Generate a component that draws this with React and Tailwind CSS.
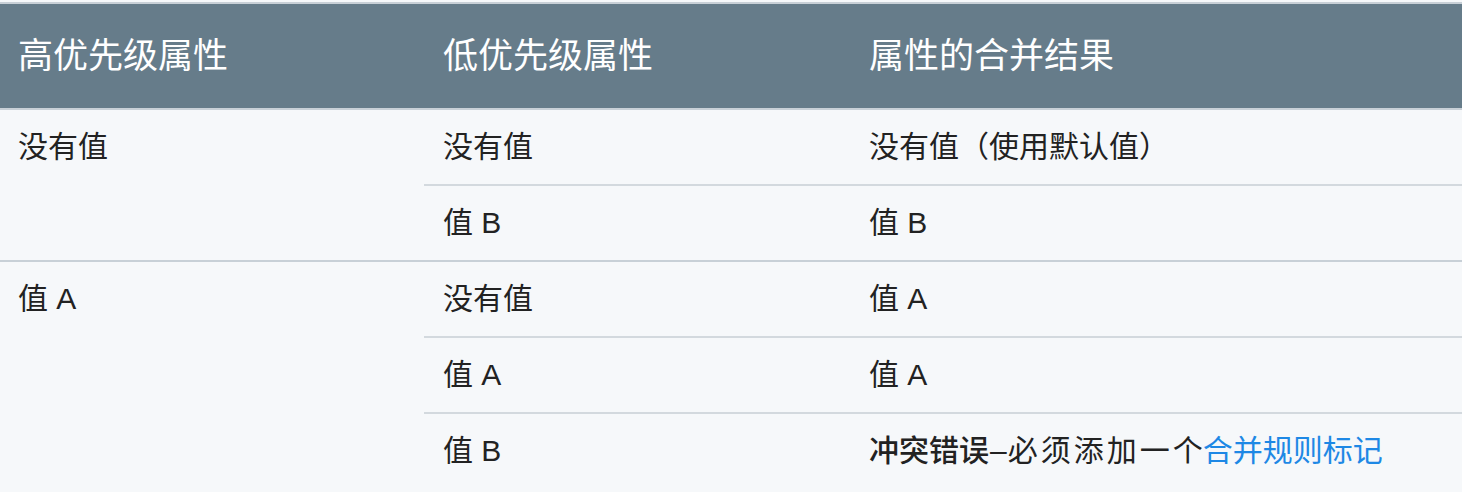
import React from 'react';

const font = { fontFamily: '"Liberation Sans", "Noto Sans CJK SC", sans-serif' };

const groups = [
  {
    high: '没有值',
    rows: [
      ['没有值', '没有值（使用默认值）'],
      ['值 B', '值 B'],
    ],
  },
  {
    high: '值 A',
    rows: [
      ['没有值', '值 A'],
      ['值 A', '值 A'],
      ['值 B', null],
    ],
  },
];

const Conflict = () => (
  <>
    <span className="font-medium">冲突错误</span>
    <span className="px-[1px]">–</span>
    <span className="tracking-[3px]">必须添加一</span>个
    <a href="#" className="text-[#1e88e5]">合并规则标记</a>
  </>
);

export default function App() {
  return (
    <div className="w-[1462px] h-[492px] overflow-hidden bg-[#f6f8fa] pt-[2px]" style={font}>
      <table className="w-[1462px] table-fixed border-collapse text-[30px] text-[#222]">
        <colgroup>
          <col className="w-[424px]" />
          <col className="w-[426px]" />
          <col className="w-[612px]" />
        </colgroup>
        <thead>
          <tr className="h-[106px] bg-[#667c8a] border-t-2 border-b-2 border-[#c8d0d7] text-white text-[35px]">
            <th className="text-left align-middle pl-[18px] font-normal">高优先级属性</th>
            <th className="text-left align-middle pl-[19px] font-normal">低优先级属性</th>
            <th className="text-left align-middle pl-[19px] font-normal">属性的合并结果</th>
          </tr>
        </thead>
        {groups.map((g, gi) => (
          <tbody key={gi} className={gi > 0 ? 'border-t-2 border-[#c8d0d7]' : ''}>
            {g.rows.map((r, ri) => {
              const last = ri === g.rows.length - 1;
              const line = last ? '' : 'border-b-2 border-[#d3d9de]';
              return (
                <tr key={ri} className="h-[76px]">
                  {ri === 0 && (
                    <td rowSpan={g.rows.length} className="align-top pl-[18px] pt-[15px] leading-[44px]">
                      {g.high}
                    </td>
                  )}
                  <td className={`align-top pl-[19px] pt-[15px] leading-[44px] ${line}`}>{r[0]}</td>
                  <td className={`align-top pl-[19px] pt-[15px] leading-[44px] ${line}`}>
                    {r[1] === null ? <Conflict /> : r[1]}
                  </td>
                </tr>
              );
            })}
          </tbody>
        ))}
      </table>
    </div>
  );
}
